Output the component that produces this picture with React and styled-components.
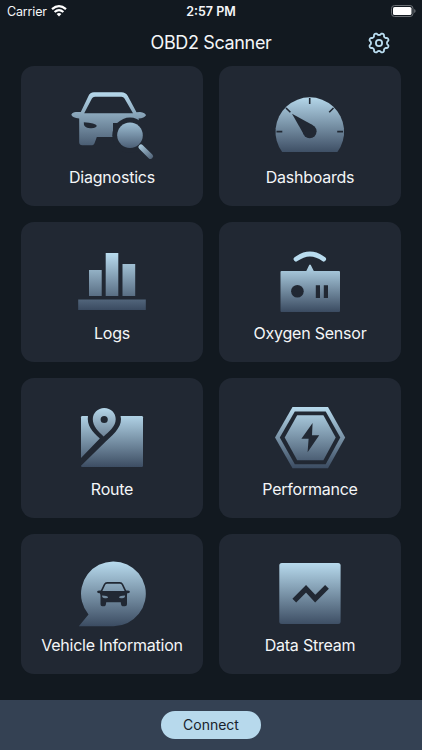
import styled, { createGlobalStyle } from "styled-components";

const GlobalStyle = createGlobalStyle`
  * {
    box-sizing: border-box;
  }

  body {
    margin: 0;
    background-color: #121920;
    font-family: Inter, "Liberation Sans", sans-serif;
  }
`

// shared vertical gradient, y values are in icon coordinates
const Fade = ({ id, from = 13, to = 78, start = "#b9dcef", end = "#38485e" }) => (
  <linearGradient id={id} gradientUnits="userSpaceOnUse" x1="0" x2="0" y1={from} y2={to}>
    <stop offset="0" stopColor={start} />
    <stop offset="1" stopColor={end} />
  </linearGradient>
)

function DiagnosticsIcon() {
  return (
    <Icon viewBox="0 0 104 86">
      <defs>
        <Fade id="diag" from={11} to={72} end="#3d4e64" />
        <Fade id="lens" from={40} to={70} start="#a5c7dc" end="#46586f" />
        <linearGradient id="handle" gradientUnits="userSpaceOnUse" x1="80" y1="66" x2="92" y2="78">
          <stop offset="0" stopColor="#a5c5d8" />
          <stop offset="1" stopColor="#53657a" />
        </linearGradient>
      </defs>
      <path
        fill="url(#diag)"
        fillRule="evenodd"
        d="M11.3 34.8Q12.5 32 16 32H20.8L28.2 16.5Q30 12.3 34 12.3H61.5Q65.6 12.3 67.8 16L76.5 32.3 80 32Q85.5 33 86 35.2 84.5 38.2 78.5 38.4L79.5 43H53V57H36.8L34.8 62.4Q34 65.3 31 65.3H22.4Q19.2 65.3 19.2 62.3V38.4Q12.5 38.2 11.3 34.8ZM24.2 33.3H73L64.5 18.6Q63.5 16.8 61.4 16.8H35Q32.8 16.8 31.9 18.6ZM23.8 42.3Q23.2 47.8 30 48.2 36.2 48.6 36.8 45.8 35.5 43.2 23.8 42.3Z"
      />
      <circle cx="70" cy="55.3" r="17.7" fill="#212833" />
      <circle cx="70" cy="55.3" r="12.8" fill="url(#lens)" />
      <path d="M81 67L90.5 76.3" stroke="url(#handle)" strokeWidth="5.2" strokeLinecap="round" />
    </Icon>
  )
}

function DashboardsIcon() {
  return (
    <Icon viewBox="0 0 104 86">
      <defs><Fade id="dash" from={15} to={75} /></defs>
      <path fill="url(#dash)" d="M24.2 72A34.3 34.3 0 1 1 79.4 72Z" />
      <path
        stroke="#212833"
        strokeWidth="1.6"
        d="M51.7 18V24M28 28L32.4 32.3M75.5 28L71.2 32.3M18.5 51.6H24.3M79.2 51.6H85"
      />
      <path fill="#212833" d="M34 33.8L54.5 44.9 45.8 54.5Z" />
      <circle cx="51.7" cy="51.3" r="6.9" fill="#212833" />
    </Icon>
  )
}

function LogsIcon() {
  return (
    <Icon viewBox="0 0 104 86">
      <defs><Fade id="logs" from={17} to={75} /></defs>
      <path fill="url(#logs)" d="M29 34H41.7V60H29ZM45.7 17H58.3V60H45.7ZM62.5 28H75.2V60H62.5ZM18.2 63.6H85.8V74H18.2Z" />
    </Icon>
  )
}

function SensorIcon() {
  return (
    <Icon viewBox="0 0 104 86">
      <defs><Fade id="sensor" from={27} to={77} /></defs>
      <path d="M38 23.2Q52 12.8 65.7 23.2" fill="none" stroke="#b9dcef" strokeWidth="4.7" strokeLinecap="round" />
      <path
        fill="url(#sensor)"
        d="M23.5 35H48.3L51.1 29.2Q52 27.7 52.9 29.2L55.8 35H81Q82 35 82 36V75Q82 76 81 76H23.5Q22.5 76 22.5 75V36Q22.5 35 23.5 35Z"
      />
      <circle cx="39.4" cy="55.3" r="6.3" fill="#212833" />
      <path fill="#212833" d="M57.8 49.3H62V62H57.8ZM65.8 49.3H70V62H65.8Z" />
    </Icon>
  )
}

function RouteIcon() {
  return (
    <Icon viewBox="0 0 104 86">
      <defs>
        <Fade id="map" from={20} to={77} />
        <Fade id="pin" from={14} to={48} end="#66798d" />
      </defs>
      <rect x="21" y="24" width="62" height="51" rx="1.2" fill="url(#map)" />
      <path
        fill="#212833"
        d="M28 23.5C26.5 33.5 32.5 40 39.8 46.5L20.5 66.5V74.2L46 49.2C55.5 40.5 63 33.5 60.5 23.5Z"
      />
      <path
        fill="url(#pin)"
        fillRule="evenodd"
        d="M44.2 16C51 16 55.7 21 55.7 27.2 55.7 34.5 48.5 40.2 43.6 44.4 38.5 39.5 32.8 34.2 32.8 27.2 32.8 21 37.8 16 44.2 16ZM44.2 23.9A3.6 3.6 0 1 0 44.2 31.1 3.6 3.6 0 1 0 44.2 23.9Z"
      />
    </Icon>
  )
}

function PerformanceIcon() {
  return (
    <Icon viewBox="0 0 104 86">
      <defs><Fade id="perf" from={14} to={78} /></defs>
      <path fill="url(#perf)" d="M34.5 15H70L87.2 45.5 70 76.2H34.5L17 45.5Z" />
      <path fill="#212833" d="M36.8 19.4H67.7L82.3 45.5 67.7 72.3H36.8L21.8 45.5Z" />
      <path fill="url(#perf)" d="M39.2 23.3H65.4L77.7 45.5 65.4 68.2H39.2L26.7 45.5Z" />
      <path fill="#212833" d="M54.6 31L43.4 46.8H50.6L49.6 60.2 61.2 43.3H54Z" />
    </Icon>
  )
}

function VehicleIcon() {
  return (
    <Icon viewBox="0 0 104 86">
      <defs><Fade id="vehicle" from={13} to={80} /></defs>
      <path fill="url(#vehicle)" d="M18.8 78.2L28.5 66.5A32.4 32.4 0 1 1 53.5 78.2Z" />
      <path
        fill="#212833"
        fillRule="evenodd"
        d="M37 43.7Q37.4 42.4 40.8 42.6L43.8 36.2Q44.8 34 47.2 34H59.8Q62.2 34 63.2 36.2L66.2 42.6Q69.7 42.4 70 43.7 69.7 45.2 67.2 45.2 67 46.2 67 48V56.3Q67 58.2 65 58.2H62.7Q61 58.2 60.8 54.2H46.2Q46 58.2 44.3 58.2H42.2Q40.5 58.2 40.5 56.3V48Q40.5 46.2 39.8 45.2 37.3 45.2 37 43.7ZM42.4 42.9H64.6L61.7 36.8Q61.2 35.7 59.8 35.7H47.2Q45.8 35.7 45.3 36.8ZM42.1 47.5Q42 50.2 45 50.2 48 50.5 48.1 49.2 47.3 47.8 42.1 47.5ZM65 47.5Q59.8 47.8 59 49.2 59.2 50.5 62.2 50.2 65.2 50.2 65 47.5Z"
      />
    </Icon>
  )
}

function StreamIcon() {
  return (
    <Icon viewBox="0 0 104 86">
      <defs><Fade id="stream" from={14} to={79} /></defs>
      <rect x="21.3" y="15" width="61.3" height="61" rx="2.5" fill="url(#stream)" />
      <path d="M36.3 52.6L48 40.8 57.2 50.6 69 38.8" fill="none" stroke="#212833" strokeWidth="5.3" />
    </Icon>
  )
}

// gear outline: eight rounded teeth around the centre
const gearPoints = Array.from({ length: 96 }, (_, i) => {
  const angle = (i / 96) * Math.PI * 2;
  const wave = Math.tanh(-Math.cos(angle * 8) * 1.8);
  const r = 9 + wave * 1.05;
  return `${(12 + r * Math.sin(angle)).toFixed(2)},${(12 - r * Math.cos(angle)).toFixed(2)}`;
}).join(" ");

const menus = [
  { name: "Diagnostics", icon: DiagnosticsIcon },
  { name: "Dashboards", icon: DashboardsIcon },
  { name: "Logs", icon: LogsIcon },
  { name: "Oxygen Sensor", icon: SensorIcon },
  { name: "Route", icon: RouteIcon },
  { name: "Performance", icon: PerformanceIcon },
  { name: "Vehicle Information", icon: VehicleIcon },
  { name: "Data Stream", icon: StreamIcon },
];

function App() {
  return (
    <Screen>
      <GlobalStyle />

      <StatusBar>
        <Carrier>
          Carrier
          <svg width="16" height="12" viewBox="0 0 16 12" fill="none" stroke="#fff" strokeWidth="2.2">
            <path d="M1 4.2Q8 -1.9 15 4.2M3.6 7Q8 3.2 12.4 7" />
            <path d="M5.6 8.9Q8 6.9 10.4 8.9L8 11.4Z" fill="#fff" stroke="none" />
          </svg>
        </Carrier>
        <Time>2:57 PM</Time>
        <Battery>
          <svg width="25" height="12" viewBox="0 0 25 12">
            <rect x="0.5" y="0.5" width="21.5" height="11" rx="3" fill="none" stroke="#6b7075" />
            <rect x="2" y="2" width="18.5" height="8" rx="1.6" fill="#fff" />
            <path d="M23.2 4Q24.6 4.6 24.6 6 24.6 7.4 23.2 8Z" fill="#6b7075" />
          </svg>
        </Battery>
      </StatusBar>

      <Header>
        <Title>OBD2 Scanner</Title>
        <SettingBtn aria-label="Settings">
          <svg width="24" height="24" viewBox="0 0 24 24" fill="none" stroke="#b9dcef" strokeWidth="1.8" strokeLinejoin="round">
            <polygon points={gearPoints} />
            <circle cx="12" cy="12" r="3.1" />
          </svg>
        </SettingBtn>
      </Header>

      <MenuGrid>
        {menus.map(({ name, icon: MenuIcon }) => (
          <MenuCard key={name}>
            <MenuIcon />
            <MenuName>{name}</MenuName>
          </MenuCard>
        ))}
      </MenuGrid>

      <Footer>
        <ConnectBtn>Connect</ConnectBtn>
      </Footer>
    </Screen>
  )
}

const Screen = styled.div`
  display: flex;
  flex-direction: column;
  width: 422px;
  height: 750px;
  overflow: hidden;
  color: #f4f6f8;
  background-color: #121920;
`

const StatusBar = styled.div`
  display: grid;
  grid-template-columns: 1fr auto 1fr;
  align-items: center;
  height: 22px;
  padding: 0 6px;
  font-size: 12.5px;
`

const Carrier = styled.div`
  display: flex;
  align-items: center;
  gap: 4px;
  padding-left: 1px;
  letter-spacing: -0.15px;
`

const Time = styled.div`
  font-weight: 600;
`

const Battery = styled.div`
  display: flex;
  justify-content: flex-end;
`

const Header = styled.header`
  display: grid;
  grid-template-columns: 1fr auto 1fr;
  align-items: center;
  height: 44px;
  padding: 0 31px 2px;
`

const Title = styled.h1`
  grid-column: 2;
  margin: 0;
  font-size: 18px;
  font-weight: 400;
  line-height: 22px;
  letter-spacing: -0.36px;
`

const SettingBtn = styled.button`
  display: flex;
  justify-self: end;
  padding: 0;
  border: 0;
  background: none;
`

const MenuGrid = styled.main`
  display: grid;
  grid-template-columns: 182px 182px;
  grid-auto-rows: 140px;
  gap: 16px;
  padding-left: 21px;
`

const MenuCard = styled.div`
  display: flex;
  flex-direction: column;
  align-items: center;
  padding-top: 14px;
  border-radius: 13px;
  background-color: #212833;
`

const Icon = styled.svg`
  display: block;
  width: 104px;
  height: 86px;
`

const MenuName = styled.span`
  font-size: 16px;
  line-height: 22px;
  letter-spacing: -0.23px;
  white-space: nowrap;
`

const Footer = styled.footer`
  display: flex;
  justify-content: center;
  align-items: center;
  height: 50px;
  margin-top: auto;
  background-color: #344153;
`

const ConnectBtn = styled.button`
  width: 100px;
  height: 28px;
  padding: 0 0 2px;
  border: 0;
  border-radius: 14px;
  color: #18222c;
  font-family: inherit;
  font-size: 14px;
  background-color: #b7d9ec;
`

export default App;
